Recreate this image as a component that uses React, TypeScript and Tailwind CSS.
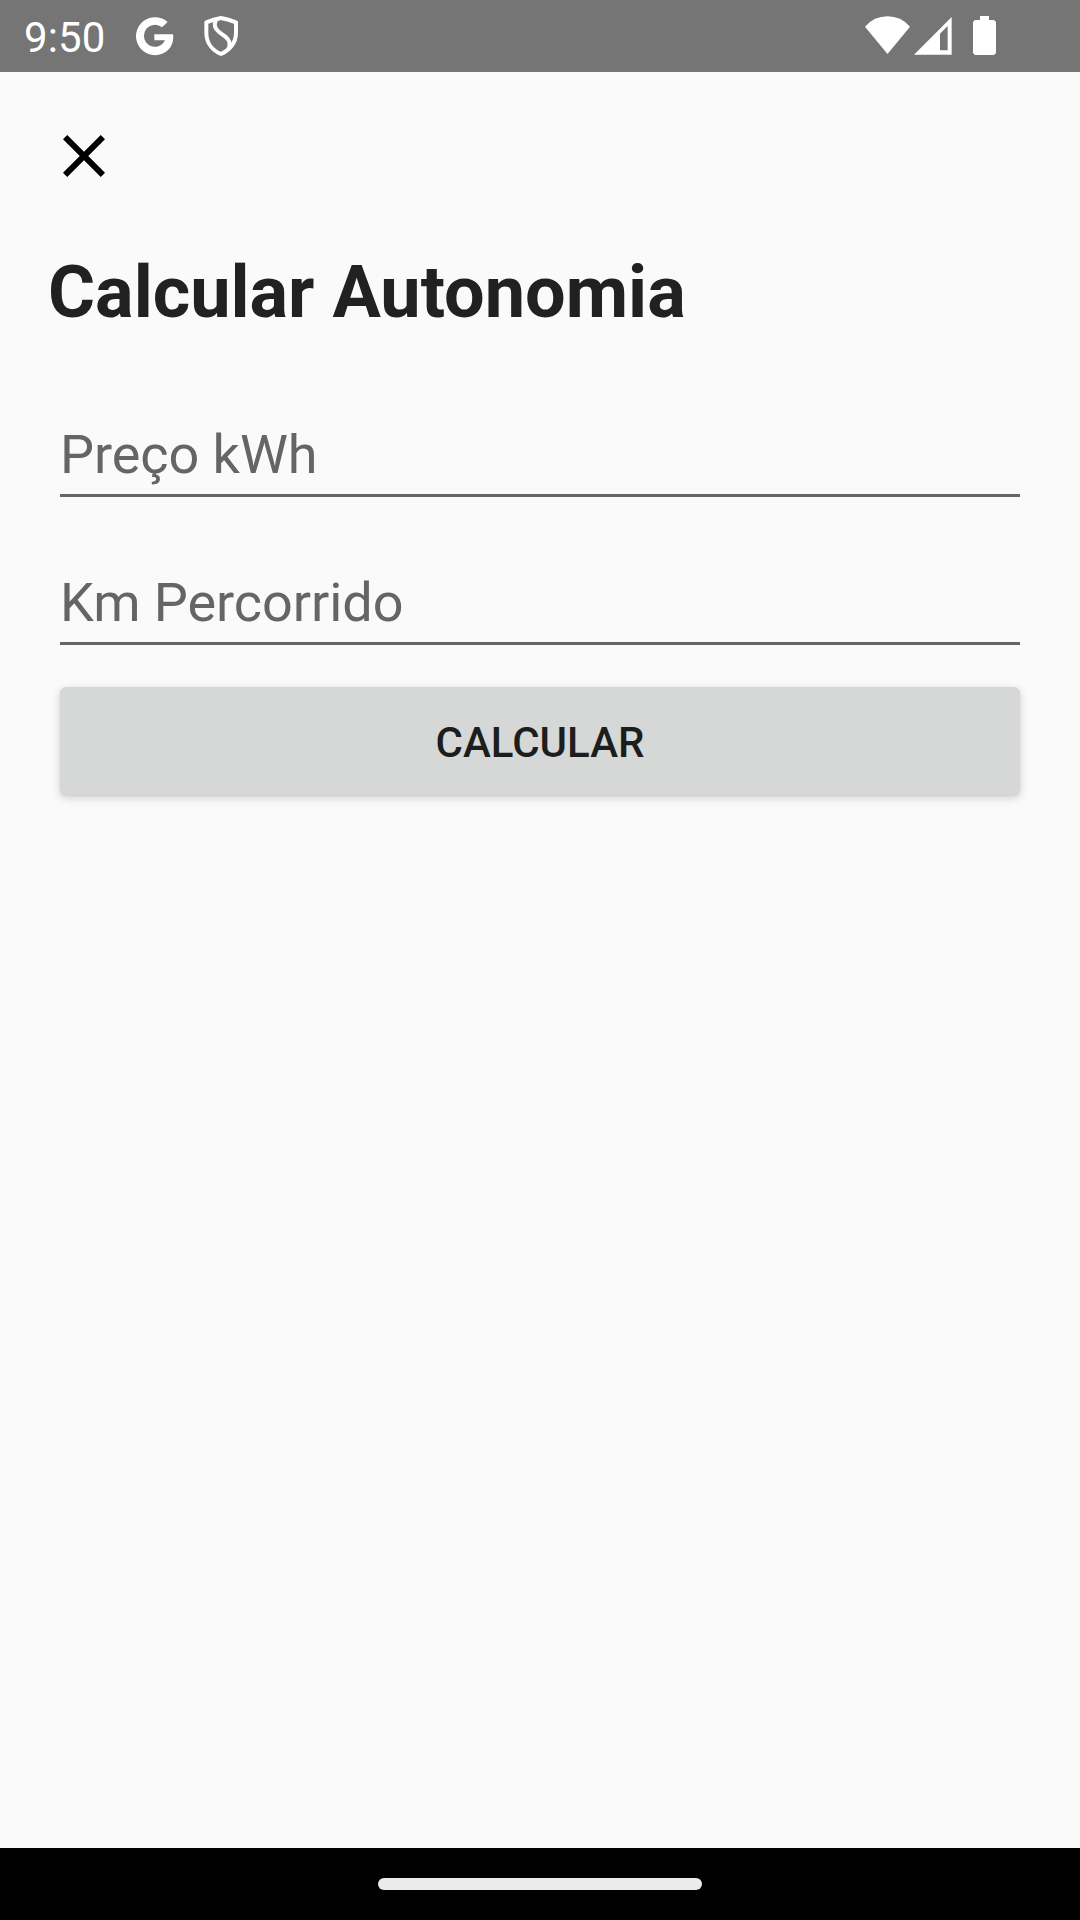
function StatusBar() {
  return (
    <header className="flex h-[72px] items-center bg-[#757575] pl-6 text-white">
      <span className="w-[80px] whitespace-nowrap pt-[3px] text-[42px] leading-[50px] tracking-[0.1px]">9:50</span>
      <svg className="ml-[32px] h-[72px] w-[38px]" viewBox="408 0 114 216" fill="currentColor">
        <path d="M503 66A57 57 0 1 0 505 149C516 138 522 122 519 103H463V121H495A33 33 0 1 1 486 82Z" />
      </svg>
      <svg className="ml-[30px] h-[72px] w-[34px]" viewBox="612 0 102 216" fill="none" stroke="currentColor" strokeWidth="12" strokeLinejoin="round">
        <path d="M663 54Q641 58 619 67V98C619 130 639 152 663 162C687 152 708 130 708 98V67Q685 58 663 54Z" />
        <path d="M648 60C641 74 644 86 657 96L676 110C690 121 693 134 684 149" strokeWidth="12" />
      </svg>
      <div className="ml-auto mr-[84px] flex">
        <svg className="h-[72px] w-[45px]" viewBox="75 0 135 216" fill="currentColor">
          <path d="M75 80Q102 49 142.500 49Q183 49 210 80L142.500 162Z" />
        </svg>
        <svg className="ml-[4px] h-[72px] w-[38px]" viewBox="222 0 114 216" fill="currentColor">
          <path fillRule="evenodd" d="M222 164L335 51V164ZM300 101V151H323V78Z" />
        </svg>
        <svg className="ml-[21px] h-[72px] w-[23px]" viewBox="399 0 69 216" fill="currentColor">
          <path d="M420 48H447V60H462L468 66V159L462 165H405L399 159V66L405 60H420Z" />
        </svg>
      </div>
    </header>
  );
}

function Field({ label }: { label: string }) {
  return (
    <input
      type="text"
      aria-label={label}
      placeholder={label}
      className="block h-[85px] w-full rounded-none border-b-[3px] border-[#656565] bg-transparent px-0 pt-[2px] pb-0 text-[54px] leading-[80px] tracking-[-0.06px] text-[#212121] outline-none placeholder:text-[#656565] placeholder:opacity-100"
    />
  );
}

export default function App() {
  return (
    <div className="flex h-[1920px] w-[1080px] flex-col overflow-hidden bg-[#fafafa] font-['Roboto',sans-serif]">
      <StatusBar />
      <main className="flex-1 px-12 pt-12">
        <button aria-label="Fechar" className="block size-[72px] text-black">
          <svg className="size-[72px]" viewBox="0 0 24 24" fill="currentColor">
            <path d="M19 6.410L17.590 5 12 10.590 6.410 5 5 6.410 10.590 12 5 17.590 6.410 19 12 13.410 17.590 19 19 17.590 13.410 12z" />
          </svg>
        </button>
        <h1 className="mt-[59px] text-[72px] font-bold leading-[84px] text-[#212121]">Calcular Autonomia</h1>
        <form className="mt-[77px] px-3">
          <Field label="Preço kWh" />
          <div className="mt-[63px]">
            <Field label="Km Percorrido" />
          </div>
          <button
            type="button"
            className="mt-[42px] flex h-[108px] w-full items-center justify-center rounded-[6px] bg-[#d6d8d7] pt-[3px] text-[42px] font-medium leading-[50px] text-[#1c1e1d] shadow-[0_3px_10px_rgba(0,0,0,0.16),0_1px_2px_rgba(0,0,0,0.08)]"
          >
            CALCULAR
          </button>
        </form>
      </main>
      <nav className="flex h-[72px] items-center justify-center bg-black">
        <div className="h-[12px] w-[324px] rounded-full bg-[#ebebeb]" />
      </nav>
    </div>
  );
}
